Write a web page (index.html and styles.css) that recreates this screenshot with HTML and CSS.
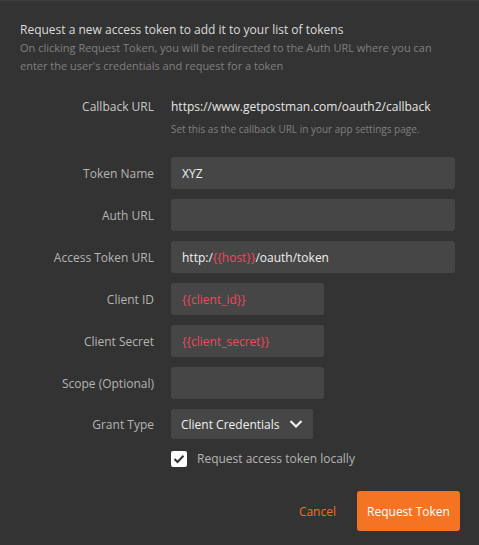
FILE: index.html
```html
<!DOCTYPE html>
<html>
<head>
<meta charset="utf-8">
<link rel="stylesheet" href="styles.css">
</head>
<body>
<div class="panel">
  <div class="intro">
    <div class="title">Request a new access token to add it to your list of tokens</div>
    <div class="desc">On clicking Request Token, you will be redirected to the Auth URL where you can enter the user's credentials and request for a token</div>
  </div>
  <div class="form">
    <div class="label cb">Callback URL</div>
    <div class="cbval">
      <div class="url">https://www.getpostman.com/oauth2/callback</div>
      <div class="hint">Set this as the callback URL in your app settings page.</div>
    </div>

    <div class="label">Token Name</div>
    <div class="input wide">XYZ</div>

    <div class="label">Auth URL</div>
    <div class="input wide"></div>

    <div class="label">Access Token URL</div>
    <div class="input wide">http:/<span class="var">{{host}}</span>/oauth/token</div>

    <div class="label">Client ID</div>
    <div class="input narrow"><span class="var">{{client_id}}</span></div>

    <div class="label">Client Secret</div>
    <div class="input narrow"><span class="var">{{client_secret}}</span></div>

    <div class="label">Scope (Optional)</div>
    <div class="input narrow"></div>

    <div class="label">Grant Type</div>
    <div class="select">
      <span class="seltext">Client Credentials</span>
      <svg class="chev" width="14" height="10" viewBox="0 0 14 10"><path d="M1.5 2 L7 7.5 L12.5 2" fill="none" stroke="#f0f0f0" stroke-width="2.2"/></svg>
    </div>

    <div></div>
    <div class="check">
      <span class="box"><svg width="12" height="10" viewBox="0 0 12 10"><path d="M1.5 5 L4.5 8 L10.5 1.8" fill="none" stroke="#333" stroke-width="2"/></svg></span>
      <span class="checklabel">Request access token locally</span>
    </div>
  </div>
  <div class="actions">
    <span class="cancel">Cancel</span>
    <span class="btn">Request Token</span>
  </div>
</div>
</body>
</html>
```

FILE: styles.css
```css
html, body {
  margin: 0;
  padding: 0;
  background: #333333;
}
body {
  font-family: "Open Sans", "Liberation Sans", sans-serif;
  width: 479px;
  height: 545px;
  overflow: hidden;
}
.panel {
  border-top: 1px solid #3d3d3d;
  padding: 20px 24px 0 20px;
  box-sizing: border-box;
  height: 545px;
}
.title {
  font-size: 12px;
  line-height: 18px;
  color: #dcdcdc;
}
.desc {
  font-size: 11px;
  line-height: 18px;
  color: #808080;
}
.form {
  margin-top: 23px;
  display: grid;
  grid-template-columns: 134px 1fr;
  column-gap: 17px;
  row-gap: 10px;
  align-items: center;
}
.label {
  text-align: right;
  font-size: 12px;
  color: #b5b5b5;
}
.label.cb {
  align-self: start;
  line-height: 18px;
  color: #c8c8c8;
}
.cbval {
  margin-bottom: 10px;
}
.url {
  font-size: 12px;
  line-height: 18px;
  color: #e6e6e6;
}
.hint {
  margin-top: 5px;
  font-size: 10px;
  line-height: 16px;
  color: #808080;
}
.input {
  height: 32px;
  box-sizing: border-box;
  background: #464646;
  border-radius: 3px;
  padding: 0 11px;
  display: flex;
  align-items: center;
  font-size: 12px;
  color: #f0f0f0;
}
.wide { width: 284px; }
.narrow { width: 153px; }
.var { color: #f0485e; }
.select {
  justify-self: start;
  height: 30px;
  box-sizing: border-box;
  background: #464646;
  border-radius: 3px;
  padding: 0 10px;
  display: flex;
  align-items: center;
  gap: 10px;
  font-size: 12px;
  color: #f0f0f0;
  white-space: nowrap;
}
.chev {
  flex-shrink: 0;
}
.check {
  margin-top: 1px;
  display: flex;
  align-items: center;
  gap: 10px;
}
.box {
  width: 16px;
  height: 16px;
  background: #ffffff;
  border-radius: 2px;
  display: flex;
  align-items: center;
  justify-content: center;
}
.checklabel {
  font-size: 12px;
  color: #b5b5b5;
}
.actions {
  margin-top: 24px;
  display: flex;
  justify-content: flex-end;
  align-items: center;
  gap: 21px;
}
.cancel {
  font-size: 12px;
  color: #f47023;
}
.btn {
  width: 103px;
  height: 40px;
  box-sizing: border-box;
  background: #f47423;
  border-radius: 3px;
  display: flex;
  align-items: center;
  justify-content: center;
  font-size: 12px;
  color: #ffffff;
  margin-right: -5px;
}
```
